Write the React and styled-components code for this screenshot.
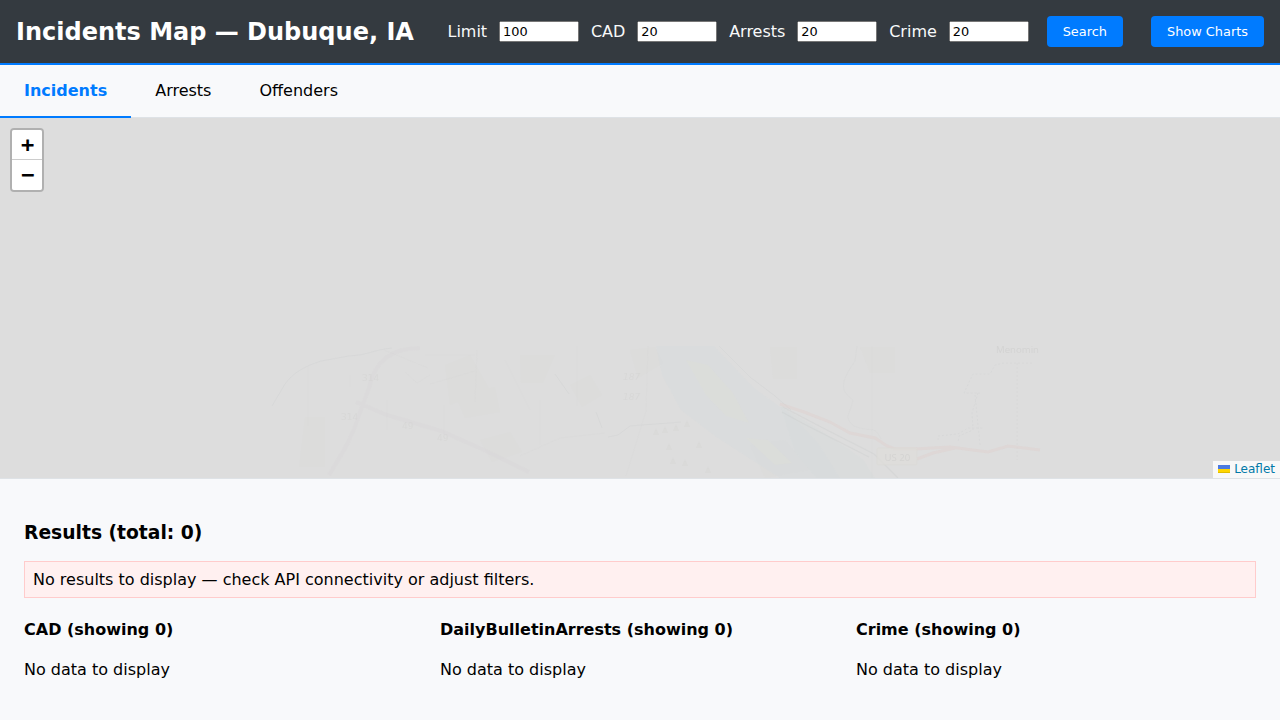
import React from "react";
import styled, { createGlobalStyle } from "styled-components";

const GlobalStyle = createGlobalStyle`
  body {
    margin: 0;
    background: #f8f9fb;
    color: #000;
    font-family: "DejaVu Sans", sans-serif;
    font-size: 16px;
  }
`;

const Header = styled.header`
  display: flex;
  align-items: center;
  justify-content: space-between;
  padding: 16px;
  background: #343a40;
  border-bottom: 2px solid #007bff;
  color: #fff;
`;

const Title = styled.h1`
  margin: 0;
  font-size: 24px;
  line-height: 28px;
  white-space: nowrap;
`;

const Controls = styled.div`
  display: flex;
  align-items: center;
  gap: 11.9px;
`;

const FieldLabel = styled.label`
  color: #f8f9fa;
`;

const NumberInput = styled.input`
  box-sizing: border-box;
  width: 80px;
  height: 21px;
  font-family: "DejaVu Sans", sans-serif;
  font-size: 12.9px;
`;

const Button = styled.button`
  margin-left: ${({ $offset }) => $offset}px;
  padding: 8px 16px;
  border: none;
  border-radius: 4px;
  background: #007bff;
  color: #fff;
  font-family: "DejaVu Sans", sans-serif;
  font-size: 12.9px;
  line-height: 15px;
  cursor: pointer;
`;

const Tabs = styled.nav`
  display: flex;
  border-bottom: 1px solid #dee2e6;
`;

const Tab = styled.div`
  margin-bottom: -1px;
  padding: 16px 24px;
  border-bottom: 2px solid ${({ $active }) => ($active ? "#007bff" : "transparent")};
  color: ${({ $active }) => ($active ? "#007bff" : "#000")};
  font-weight: ${({ $active }) => ($active ? "bold" : "normal")};
  line-height: 19px;
  cursor: pointer;
`;

const MapPane = styled.section`
  position: relative;
  height: 360px;
  overflow: hidden;
  background: #ddd;
  border-bottom: 1px solid #dee2e6;
`;

const Tiles = styled.svg`
  position: absolute;
  left: 272px;
  top: 228px;
  width: 768px;
  height: 132px;
  overflow: visible;
`;

const ZoomBar = styled.div`
  position: absolute;
  left: 10px;
  top: 10px;
  border: 2px solid rgba(0, 0, 0, 0.2);
  border-radius: 4px;
  background-clip: padding-box;
`;

const ZoomButton = styled.div`
  width: 30px;
  height: 30px;
  box-sizing: border-box;
  border-bottom: ${({ $divided }) => ($divided ? "1px solid #ccc" : "none")};
  border-radius: ${({ $divided }) => ($divided ? "2px 2px 0 0" : "0 0 2px 2px")};
  background: #fff;
  color: #000;
  font: bold 22px "DejaVu Sans Mono", monospace;
  line-height: 30px;
  text-align: center;
  text-indent: 1px;
`;

const Attribution = styled.div`
  position: absolute;
  right: 0;
  bottom: 0;
  padding: 0 5px;
  background: rgba(255, 255, 255, 0.8);
  color: #0078a8;
  font-size: 12px;
  line-height: 1.4;
  white-space: nowrap;
`;

const Flag = styled.svg`
  display: inline;
  width: 12px;
  height: 8px;
  vertical-align: baseline;
`;

const Results = styled.main`
  padding: 24px;
`;

const ResultsTitle = styled.h3`
  margin: 18.72px 0;
  font-size: 18.72px;
`;

const Notice = styled.div`
  padding: 8px;
  border: 1px solid #ffcccc;
  background: #fff0f0;
  line-height: 19px;
`;

const Columns = styled.div`
  display: grid;
  grid-template-columns: repeat(3, 1fr);
  gap: 16px;
`;

const ColumnTitle = styled.h4`
  margin: 21.28px 0;
  font-size: 16px;
  line-height: 19px;
`;

const Empty = styled.div`
  line-height: 19px;
`;

const fields = [
  ["Limit", 100],
  ["CAD", 20],
  ["Arrests", 20],
  ["Crime", 20],
];

const groups = ["CAD", "DailyBulletinArrests", "Crime"];

function MapTiles() {
  return (
    <Tiles viewBox="272 346 768 132" fill="none">
      <rect x="272" y="346" width="768" height="132" fill="#dedede" opacity="0.4" />
      <g fill="#d9dbd2" opacity="0.13">
        <path d="M305 417h20v50h-26zM445 365l25-10 20 35-40 15zM520 355l35 0-12 28-22 0zM455 395l40-8 5 25-35 6zM570 385l20-10 12 20-20 12z" />
        <path d="M770 347h27v32h-24zM860 347h35v26h-25zM630 350l25-3 8 16-25 15zM480 440l30-8 12 20-30 10zM750 445l35-5 25 30-45 8z" />
      </g>
      <path d="M656 346 662 375 681 410 715 436 749 458 780 478 840 478 818 443 791 415 754 388 714 346z" fill="#d6dbdf" opacity="0.36" />
      <path d="M780 405 828 435 863 459 875 478 816 478 795 452z" fill="#d5dcdc" opacity="0.28" />
      <path d="M686 360l22 5 25 28 16 30-23-7-20-21zM746 438l22 2 24 23-17 2z" fill="#dcddd9" opacity="0.6" />
      <g stroke="#d9d5d9" strokeWidth="4" opacity="0.28">
        <path d="M420 348c-35 0-47 20-51 40l-10 27c-7 24-18 40-30 60M356 402l31 13 54 16 43 19 45 22" />
      </g>
      <g stroke="#ced0d1" strokeWidth="1" opacity="0.35">
        <path d="M272 406l13-22c8-11 18-17 36-23l28-5c20-1 23-6 43-8M555 374l14 20M596 412l6 16M630 426l51-4M608 437l10-2 12-9M719 346l31 31 25 19 16 14" />
        <path d="M857 346l-2 15c-16 23-14 30-2 39-3 15-10 17 1 26 17 7 20-2 27 13M872 346v132" strokeWidth="0.8" opacity="0.7" />
        <path d="M1032 363h-28l-9 2-5 9-17 0-9 19 0 0h16M978 393l-6 20 1 17-14 6-1 6M975 395l5 50M1017 363v97M938 440v-4l20-2 10-6 16 0" strokeDasharray="2 2" />
      </g>
      <g stroke="#c9cccd" strokeWidth="1.2" opacity="0.36">
        <path d="M783 407l40 21 51 26 24 24M782 412l20 11 67 34" />
      </g>
      <g stroke="#d2d6d5" strokeWidth="1" opacity="0.16">
        <path d="M308 366v60M350 375v12M387 400v30M405 372l12 11 13-8M425 355h50M477 350l-2 52M505 360l25 50M540 400v45M444 405v30M384 350l44 18M430 384l45-13M577 346v60M648 346l-2 65-20 65M520 456l40-18 45-5" />
      </g>
      <g stroke="#dfcfcc" strokeWidth="3" opacity="0.42">
        <path d="M780 404 804 412 830 422 850 433 875 438 887 446 895 449 915 449 950 447 988 452 1008 446 1040 450" />
        <path d="M917 459 933 453 955 448" />
      </g>
      <g fill="#d2d5d0" opacity="0.32">
        <path d="M653 435l3-7 3 7zM662 433l3-7 3 7zM673 431l3-7 3 7zM684 427l3-7 3 7zM696 448l3-7 3 7zM666 450l3-7 3 7zM670 464l3-7 3 7zM682 466l3-7 3 7zM705 473l3-7 3 7z" />
      </g>
      <rect x="877" y="448" width="40" height="17" rx="1" fill="#deddda" stroke="#dad8d3" strokeWidth="0.7" opacity="0.7" />
      <g fill="#cbcbc9" fontFamily="DejaVu Sans" fontSize="9" opacity="0.28">
        <text x="362" y="381">314</text>
        <text x="341" y="420">314</text>
        <text x="402" y="429">49</text>
        <text x="437" y="441">49</text>
        <text x="623" y="380" fontStyle="italic">187</text>
        <text x="623" y="400" fontStyle="italic">187</text>
      </g>
      <g fill="#c9c9c8" fontFamily="Open Sans" fontSize="9.6" opacity="0.5">
        <text x="884.5" y="461">US 20</text>
        <text x="996" y="352.5" textLength="43" lengthAdjust="spacingAndGlyphs">Menomin</text>
      </g>
    </Tiles>
  );
}

export default function App() {
  return (
    <>
      <GlobalStyle />
      <Header>
        <Title>Incidents Map — Dubuque, IA</Title>
        <Controls>
          {fields.map(([label, value]) => (
            <React.Fragment key={label}>
              <FieldLabel>{label}</FieldLabel>
              <NumberInput type="number" defaultValue={value} aria-label={label} />
            </React.Fragment>
          ))}
          <Button $offset={6.1}>Search</Button>
          <Button $offset={16.1}>Show Charts</Button>
        </Controls>
      </Header>
      <Tabs>
        <Tab $active>Incidents</Tab>
        <Tab>Arrests</Tab>
        <Tab>Offenders</Tab>
      </Tabs>
      <MapPane>
        <MapTiles />
        <ZoomBar>
          <ZoomButton $divided>+</ZoomButton>
          <ZoomButton>−</ZoomButton>
        </ZoomBar>
        <Attribution>
          <Flag viewBox="0 0 12 8">
            <path fill="#4C7BE1" d="M0 0h12v4H0z" />
            <path fill="#FFD500" d="M0 4h12v3H0z" />
            <path fill="#E0BC00" d="M0 7h12v1H0z" />
          </Flag>{" "}
          Leaflet
        </Attribution>
      </MapPane>
      <Results>
        <ResultsTitle>Results (total: 0)</ResultsTitle>
        <Notice>No results to display — check API connectivity or adjust filters.</Notice>
        <Columns>
          {groups.map((name) => (
            <section key={name}>
              <ColumnTitle>{name} (showing 0)</ColumnTitle>
              <Empty>No data to display</Empty>
            </section>
          ))}
        </Columns>
      </Results>
    </>
  );
}
